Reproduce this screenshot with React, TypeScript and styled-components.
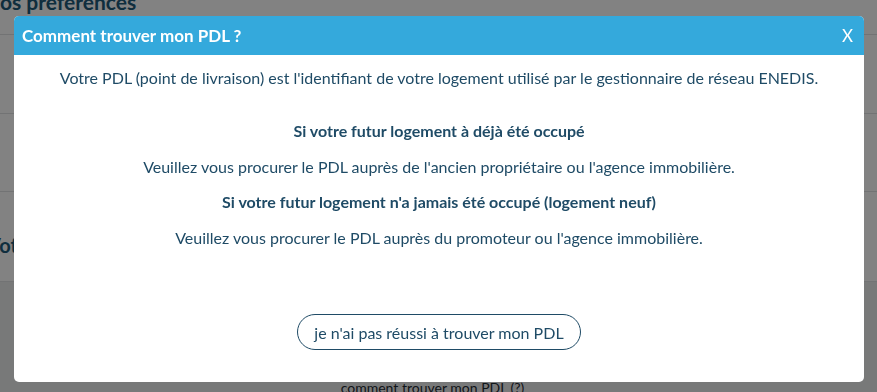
import styled, { createGlobalStyle } from 'styled-components'

const GlobalStyle = createGlobalStyle`
  html, body {
    margin: 0;
    padding: 0;
    overflow: hidden;
  }
  body {
    font-family: Lato, "Open Sans", "Liberation Sans", sans-serif;
    color: #1f4b66;
    background: #ffffff;
  }
`

// page behind the modal
const Page = styled.div`
  width: 877px;
  height: 392px;
  overflow: hidden;
`

const Band = styled.section<{ $height: number; $tint?: boolean }>`
  height: ${p => p.$height}px;
  background: ${p => (p.$tint ? '#ecedee' : '#ffffff')};
  border-bottom: 1px solid #dfe2e4;
  display: flex;
  align-items: center;
  overflow: hidden;
`

const PageTitle = styled.h1`
  margin: -32px 0 0 -13px;
  font-size: 21px;
  font-weight: 700;
  color: #1f5a7a;
  line-height: 1;
`

const SideLabel = styled.h2`
  margin: 16px 0 0 -13px;
  font-size: 20px;
  font-weight: 700;
  color: #1f5a7a;
`

const HelpLink = styled.div`
  width: 100%;
  text-align: center;
  font-size: 14px;
  color: #1f2b33;
  padding: 96px 0 0 0;
  margin-left: -6px;
`

const Overlay = styled.div`
  position: fixed;
  inset: 0;
  background: rgba(0, 0, 0, 0.49);
`

const Modal = styled.div`
  position: fixed;
  left: 14px;
  top: 16px;
  width: 850px;
  height: 366px;
  background: #ffffff;
  border-radius: 5px;
  overflow: hidden;
  display: flex;
  flex-direction: column;
`

const Header = styled.header`
  height: 39px;
  background: #34a9dc;
  display: flex;
  align-items: center;
  justify-content: space-between;
  padding: 0 11px 0 8px;
  color: #ffffff;
`

const Title = styled.h3`
  margin: 0;
  font-size: 17px;
  font-weight: 700;
`

const Close = styled.button`
  border: 0;
  background: none;
  color: #ffffff;
  font-family: inherit;
  font-size: 17px;
  font-weight: 400;
  padding: 0;
  cursor: pointer;
`

const Body = styled.div`
  flex: 1;
  display: flex;
  flex-direction: column;
  align-items: center;
  text-align: center;
  font-size: 16px;
  line-height: 18px;
`

const Intro = styled.p`
  margin: 14px 0 35px;
`

const Case = styled.p<{ $bold?: boolean }>`
  margin: 0 0 ${p => (p.$bold ? 18 : 17)}px;
  font-weight: ${p => (p.$bold ? 700 : 400)};
`

const OutlineButton = styled.button`
  margin-top: 50px;
  height: 36px;
  width: 284px;
  border: 1px solid #1f4b66;
  border-radius: 18px;
  background: #ffffff;
  color: #1f4b66;
  font-family: inherit;
  font-size: 16px;
  cursor: pointer;
`

const App = () => {
  return (
    <>
      <GlobalStyle />
      <Page>
        <Band $height={34}>
          <PageTitle>Vos préférences</PageTitle>
        </Band>
        <Band $height={78} />
        <Band $height={77} />
        <Band $height={89}>
          <SideLabel>Votre</SideLabel>
        </Band>
        <Band $height={114} $tint>
          <HelpLink>comment trouver mon PDL (?)</HelpLink>
        </Band>
      </Page>
      <Overlay />
      <Modal role="dialog">
        <Header>
          <Title>Comment trouver mon PDL ?</Title>
          <Close>X</Close>
        </Header>
        <Body>
          <Intro>
            Votre PDL (point de livraison) est l'identifiant de votre logement utilisé par le gestionnaire de réseau ENEDIS.
          </Intro>
          <Case $bold>Si votre futur logement à déjà été occupé</Case>
          <Case>Veuillez vous procurer le PDL auprès de l'ancien propriétaire ou l'agence immobilière.</Case>
          <Case $bold>Si votre futur logement n'a jamais été occupé (logement neuf)</Case>
          <Case>Veuillez vous procurer le PDL auprès du promoteur ou l'agence immobilière.</Case>
          <OutlineButton>je n'ai pas réussi à trouver mon PDL</OutlineButton>
        </Body>
      </Modal>
    </>
  )
}

export default App
